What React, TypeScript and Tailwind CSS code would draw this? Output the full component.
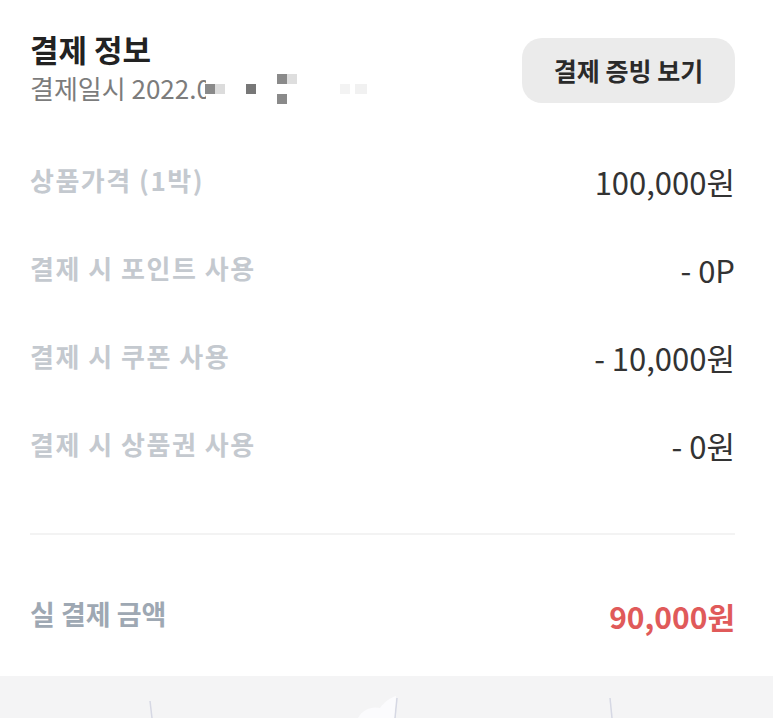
import React from "react";

const font = { fontFamily: '"Noto Sans CJK KR", "Noto Sans", sans-serif' };

function Row({ label, value }: { label: string; value: string }) {
  return (
    <div className="flex h-[88px] items-center justify-between">
      <span className="-mt-[6px] text-[26px] font-bold tracking-[1.5px] text-[#c4c9cf]">{label}</span>
      <span className="text-[31px] font-normal text-[#333333]">{value}</span>
    </div>
  );
}

export default function App() {
  return (
    <div className="w-[773px] h-[718px] overflow-hidden bg-white" style={font}>
      <div className="pl-[30px] pr-[38px]">
        <div className="flex items-start justify-between pt-[28px]">
          <div className="flex flex-col">
            <h1 className="text-[31px] font-bold leading-[42px] text-[#222222]">결제 정보</h1>
            <div className="relative flex items-center text-[26px] leading-[36px] text-[#7c7c7c]">
              <span>결제일시 2022.</span>
              <span className="inline-block w-[10px] overflow-hidden">0</span>
              <span className="absolute left-[175px] top-[14px] h-[10px] w-[10px] bg-[#8a8a8a]" />
              <span className="absolute left-[185px] top-[14px] h-[10px] w-[10px] bg-[#dcdcdc]" />
              <span className="absolute left-[216px] top-[14px] h-[10px] w-[10px] bg-[#777777]" />
              <span className="absolute left-[247px] top-[4px] h-[10px] w-[10px] bg-[#8a8a8a]" />
              <span className="absolute left-[257px] top-[4px] h-[10px] w-[10px] bg-[#dedede]" />
              <span className="absolute left-[247px] top-[24px] h-[10px] w-[10px] bg-[#8a8a8a]" />
              <span className="absolute left-[310px] top-[14px] h-[10px] w-[10px] bg-[#f3f3f3]" />
              <span className="absolute left-[325px] top-[14px] h-[10px] w-[12px] bg-[#f1f1f1]" />
            </div>
          </div>
          <button className="mt-[10px] flex h-[65px] w-[213px] items-center justify-center rounded-[20px] bg-[#ebebeb] text-[25px] font-bold text-[#2a2a2a]">
            결제 증빙 보기
          </button>
        </div>

        <div className="mt-[32px] flex flex-col">
          <Row label="상품가격 (1박)" value="100,000원" />
          <Row label="결제 시 포인트 사용" value="- 0P" />
          <Row label="결제 시 쿠폰 사용" value="- 10,000원" />
          <Row label="결제 시 상품권 사용" value="- 0원" />
        </div>

        <div className="mt-[43px] h-[2px] bg-[#f3f3f3]" />

        <div className="flex h-[141px] items-center justify-between pt-[22px]">
          <span className="-mt-[4px] text-[27px] font-bold text-[#9ea8b3]">실 결제 금액</span>
          <span className="text-[30px] font-bold text-[#e05a5a]">90,000원</span>
        </div>
      </div>

      <div className="relative h-[42px] bg-[#f4f4f5]">
        <svg className="absolute left-0 top-0" width="773" height="42" viewBox="0 0 773 42">
          <path d="M150 25 L152 42" stroke="#d6d8e4" strokeWidth="1.5" fill="none" />
          <path d="M397 22 L395 42" stroke="#d6d8e4" strokeWidth="1.5" fill="none" />
          <path d="M358 42 C362 34 372 30 380 32 C384 26 390 22 396 20 L394 42 Z" fill="#fbfbfd" />
          <path d="M610 22 L612 42" stroke="#d6d8e4" strokeWidth="1.5" fill="none" />
        </svg>
      </div>
    </div>
  );
}
